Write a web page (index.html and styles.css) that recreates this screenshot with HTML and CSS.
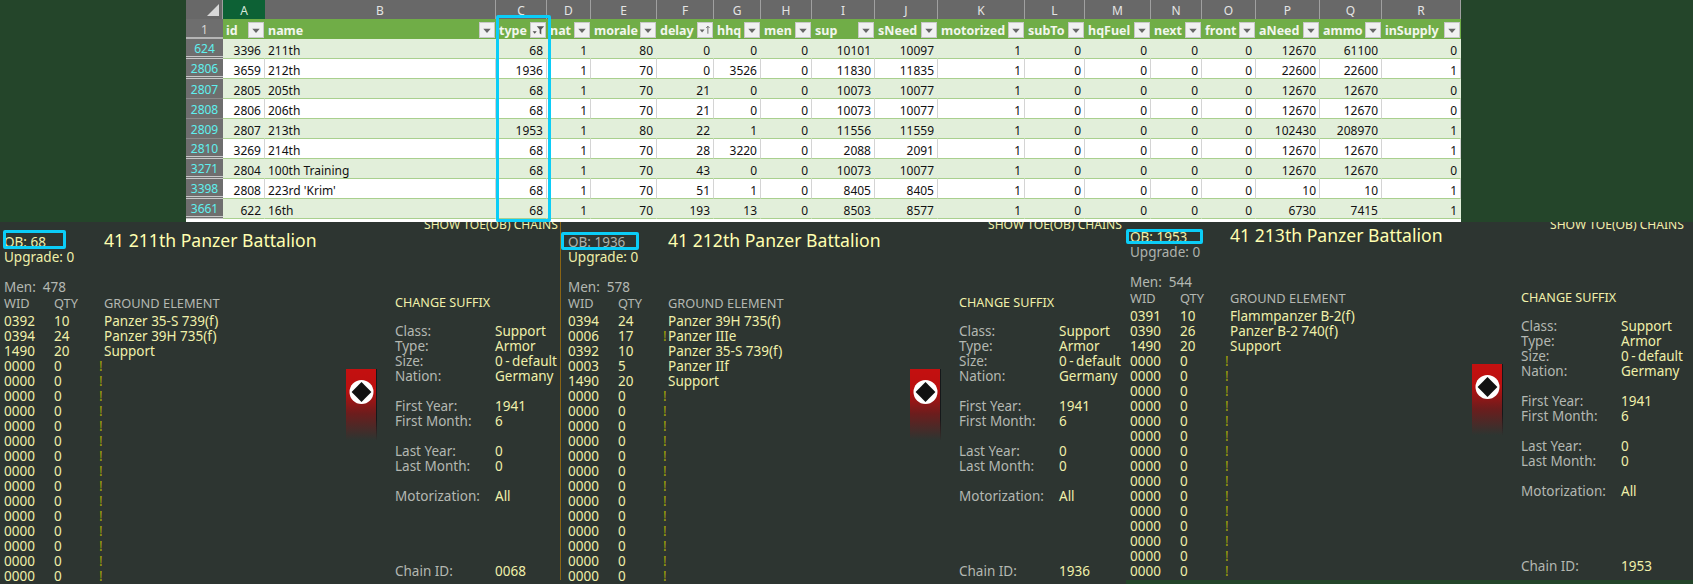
FILE: index.html
```html
<!DOCTYPE html>
<html lang="en">
<head>
    <meta charset="UTF-8">
    <title>TOE chains</title>
    <link rel="stylesheet" href="styles.css">
</head>
<body>
    <svg class="defs" width="0" height="0">
        <symbol id="arrow" viewBox="0 0 17 17"><path d="M4 7h9l-4.500 5z" fill="#666"/></symbol>
        <symbol id="funnel" viewBox="0 0 17 17"><path d="M7 4h9l-3.500 4v6l-2-1.500v-4.500z" fill="#555"/><path d="M2 10h5l-2.500 3z" fill="#555"/></symbol>
        <symbol id="sort" viewBox="0 0 17 17"><path d="M2 8h6l-3 3.500z" fill="#666"/><path d="M12 4v9" stroke="#555"/><path d="M10 6l2-2 2 2" stroke="#555" fill="none"/></symbol>
        <symbol id="banner" viewBox="0 0 31 71">
            <circle cx="15.500" cy="23" r="12" fill="#fff"/>
            <rect x="8.500" y="16" width="14" height="14" fill="#111" transform="rotate(45 15.500 23)"/>
        </symbol>
    </svg>

    <div class="sheet">
        <table>
            <colgroup>
                <col class="w-head"><col class="w-a"><col class="w-b"><col class="w-c"><col class="w-d"><col class="w-e"><col class="w-f"><col class="w-g"><col class="w-h"><col class="w-i"><col class="w-j"><col class="w-k"><col class="w-l"><col class="w-m"><col class="w-n"><col class="w-o"><col class="w-p"><col class="w-q"><col class="w-r">
            </colgroup>
            <thead>
                <tr class="letters">
                    <th class="corner"><span class="corner-mark"></span></th>
                    <th class="picked">A</th><th>B</th><th>C</th><th>D</th><th>E</th><th>F</th><th>G</th><th>H</th><th>I</th><th>J</th><th>K</th><th>L</th><th>M</th><th>N</th><th>O</th><th>P</th><th>Q</th><th>R</th>
                </tr>
                <tr class="titles">
                    <th class="row-no first">1</th>
                    <th><div class="title-cell">id<svg class="drop"><use href="#arrow"/></svg></div></th>
                    <th><div class="title-cell">name<svg class="drop"><use href="#arrow"/></svg></div></th>
                    <th><div class="title-cell">type<svg class="drop"><use href="#funnel"/></svg></div></th>
                    <th><div class="title-cell">nat<svg class="drop"><use href="#arrow"/></svg></div></th>
                    <th><div class="title-cell">morale<svg class="drop"><use href="#arrow"/></svg></div></th>
                    <th><div class="title-cell">delay<svg class="drop"><use href="#sort"/></svg></div></th>
                    <th><div class="title-cell">hhq<svg class="drop"><use href="#arrow"/></svg></div></th>
                    <th><div class="title-cell">men<svg class="drop"><use href="#arrow"/></svg></div></th>
                    <th><div class="title-cell">sup<svg class="drop"><use href="#arrow"/></svg></div></th>
                    <th><div class="title-cell">sNeed<svg class="drop"><use href="#arrow"/></svg></div></th>
                    <th><div class="title-cell">motorized<svg class="drop"><use href="#arrow"/></svg></div></th>
                    <th><div class="title-cell">subTo<svg class="drop"><use href="#arrow"/></svg></div></th>
                    <th><div class="title-cell">hqFuel<svg class="drop"><use href="#arrow"/></svg></div></th>
                    <th><div class="title-cell">next<svg class="drop"><use href="#arrow"/></svg></div></th>
                    <th><div class="title-cell">front<svg class="drop"><use href="#arrow"/></svg></div></th>
                    <th><div class="title-cell">aNeed<svg class="drop"><use href="#arrow"/></svg></div></th>
                    <th><div class="title-cell">ammo<svg class="drop"><use href="#arrow"/></svg></div></th>
                    <th><div class="title-cell">inSupply<svg class="drop"><use href="#arrow"/></svg></div></th>
                </tr>
            </thead>
            <tbody>
                <tr><th class="row-no gap">624</th><td>3396</td><td class="name">211th</td><td>68</td><td>1</td><td>80</td><td>0</td><td>0</td><td>0</td><td>10101</td><td>10097</td><td>1</td><td>0</td><td>0</td><td>0</td><td>0</td><td>12670</td><td>61100</td><td>0</td></tr>
                <tr><th class="row-no gap">2806</th><td>3659</td><td class="name">212th</td><td>1936</td><td>1</td><td>70</td><td>0</td><td>3526</td><td>0</td><td>11830</td><td>11835</td><td>1</td><td>0</td><td>0</td><td>0</td><td>0</td><td>22600</td><td>22600</td><td>1</td></tr>
                <tr><th class="row-no">2807</th><td>2805</td><td class="name">205th</td><td>68</td><td>1</td><td>70</td><td>21</td><td>0</td><td>0</td><td>10073</td><td>10077</td><td>1</td><td>0</td><td>0</td><td>0</td><td>0</td><td>12670</td><td>12670</td><td>0</td></tr>
                <tr><th class="row-no">2808</th><td>2806</td><td class="name">206th</td><td>68</td><td>1</td><td>70</td><td>21</td><td>0</td><td>0</td><td>10073</td><td>10077</td><td>1</td><td>0</td><td>0</td><td>0</td><td>0</td><td>12670</td><td>12670</td><td>0</td></tr>
                <tr><th class="row-no">2809</th><td>2807</td><td class="name">213th</td><td>1953</td><td>1</td><td>80</td><td>22</td><td>1</td><td>0</td><td>11556</td><td>11559</td><td>1</td><td>0</td><td>0</td><td>0</td><td>0</td><td>102430</td><td>208970</td><td>1</td></tr>
                <tr><th class="row-no gap">2810</th><td>3269</td><td class="name">214th</td><td>68</td><td>1</td><td>70</td><td>28</td><td>3220</td><td>0</td><td>2088</td><td>2091</td><td>1</td><td>0</td><td>0</td><td>0</td><td>0</td><td>12670</td><td>12670</td><td>1</td></tr>
                <tr><th class="row-no gap">3271</th><td>2804</td><td class="name">100th Training</td><td>68</td><td>1</td><td>70</td><td>43</td><td>0</td><td>0</td><td>10073</td><td>10077</td><td>1</td><td>0</td><td>0</td><td>0</td><td>0</td><td>12670</td><td>12670</td><td>0</td></tr>
                <tr><th class="row-no gap">3398</th><td>2808</td><td class="name">223rd 'Krim'</td><td>68</td><td>1</td><td>70</td><td>51</td><td>1</td><td>0</td><td>8405</td><td>8405</td><td>1</td><td>0</td><td>0</td><td>0</td><td>0</td><td>10</td><td>10</td><td>1</td></tr>
                <tr><th class="row-no gap">3661</th><td>622</td><td class="name">16th</td><td>68</td><td>1</td><td>70</td><td>193</td><td>13</td><td>0</td><td>8503</td><td>8577</td><td>1</td><td>0</td><td>0</td><td>0</td><td>0</td><td>6730</td><td>7415</td><td>1</td></tr>
            </tbody>
        </table>
        <div class="col-mark"></div>
    </div>

    <div class="panels">
        <section class="panel panel-one">
            <div class="toe-link">SHOW TOE(OB) CHAINS</div>
            <div class="panel-main">
                <div class="unit">
                    <div class="unit-head">
                        <div class="stats">
                            <div class="ob">OB: 68<span class="ob-mark"></span></div>
                            <div>Upgrade: 0</div>
                        </div>
                        <h1>41 211th Panzer Battalion</h1>
                    </div>
                    <div class="men">Men:&nbsp; 478</div>
                    <div class="el-head"><span>WID</span><span>QTY</span><span></span><span>GROUND ELEMENT</span></div>
                    <div class="el"><span>0392</span><span>10</span><i></i><span>Panzer 35-S 739(f)</span></div>
                    <div class="el"><span>0394</span><span>24</span><i></i><span>Panzer 39H 735(f)</span></div>
                    <div class="el"><span>1490</span><span>20</span><i></i><span>Support</span></div>
                    <div class="el"><span>0000</span><span>0</span><i>!</i></div>
                    <div class="el"><span>0000</span><span>0</span><i>!</i></div>
                    <div class="el"><span>0000</span><span>0</span><i>!</i></div>
                    <div class="el"><span>0000</span><span>0</span><i>!</i></div>
                    <div class="el"><span>0000</span><span>0</span><i>!</i></div>
                    <div class="el"><span>0000</span><span>0</span><i>!</i></div>
                    <div class="el"><span>0000</span><span>0</span><i>!</i></div>
                    <div class="el"><span>0000</span><span>0</span><i>!</i></div>
                    <div class="el"><span>0000</span><span>0</span><i>!</i></div>
                    <div class="el"><span>0000</span><span>0</span><i>!</i></div>
                    <div class="el"><span>0000</span><span>0</span><i>!</i></div>
                    <div class="el"><span>0000</span><span>0</span><i>!</i></div>
                    <div class="el"><span>0000</span><span>0</span><i>!</i></div>
                    <div class="el"><span>0000</span><span>0</span><i>!</i></div>
                    <div class="el"><span>0000</span><span>0</span><i>!</i></div>
                </div>
                <div class="flag"><svg class="flag-mark"><use href="#banner"/></svg></div>
                <div class="info">
                    <div class="suffix">CHANGE SUFFIX</div>
                    <dl>
                        <dt>Class:</dt><dd>Support</dd>
                        <dt>Type:</dt><dd>Armor</dd>
                        <dt>Size:</dt><dd>0 - default</dd>
                        <dt>Nation:</dt><dd>Germany</dd>
                    </dl>
                    <dl>
                        <dt>First Year:</dt><dd>1941</dd>
                        <dt>First Month:</dt><dd>6</dd>
                    </dl>
                    <dl>
                        <dt>Last Year:</dt><dd>0</dd>
                        <dt>Last Month:</dt><dd>0</dd>
                    </dl>
                    <dl>
                        <dt>Motorization:</dt><dd>All</dd>
                    </dl>
                    <dl class="chain">
                        <dt>Chain ID:</dt><dd>0068</dd>
                    </dl>
                </div>
            </div>
        </section>

        <section class="panel panel-two">
            <div class="toe-link">SHOW TOE(OB) CHAINS</div>
            <div class="panel-main">
                <div class="unit">
                    <div class="unit-head">
                        <div class="stats">
                            <div class="ob">OB: 1936<span class="ob-mark"></span></div>
                            <div>Upgrade: 0</div>
                        </div>
                        <h1>41 212th Panzer Battalion</h1>
                    </div>
                    <div class="men">Men:&nbsp; 578</div>
                    <div class="el-head"><span>WID</span><span>QTY</span><span></span><span>GROUND ELEMENT</span></div>
                    <div class="el"><span>0394</span><span>24</span><i></i><span>Panzer 39H 735(f)</span></div>
                    <div class="el"><span>0006</span><span>17</span><i>!</i><span>Panzer IIIe</span></div>
                    <div class="el"><span>0392</span><span>10</span><i></i><span>Panzer 35-S 739(f)</span></div>
                    <div class="el"><span>0003</span><span>5</span><i></i><span>Panzer IIf</span></div>
                    <div class="el"><span>1490</span><span>20</span><i></i><span>Support</span></div>
                    <div class="el"><span>0000</span><span>0</span><i>!</i></div>
                    <div class="el"><span>0000</span><span>0</span><i>!</i></div>
                    <div class="el"><span>0000</span><span>0</span><i>!</i></div>
                    <div class="el"><span>0000</span><span>0</span><i>!</i></div>
                    <div class="el"><span>0000</span><span>0</span><i>!</i></div>
                    <div class="el"><span>0000</span><span>0</span><i>!</i></div>
                    <div class="el"><span>0000</span><span>0</span><i>!</i></div>
                    <div class="el"><span>0000</span><span>0</span><i>!</i></div>
                    <div class="el"><span>0000</span><span>0</span><i>!</i></div>
                    <div class="el"><span>0000</span><span>0</span><i>!</i></div>
                    <div class="el"><span>0000</span><span>0</span><i>!</i></div>
                    <div class="el"><span>0000</span><span>0</span><i>!</i></div>
                    <div class="el"><span>0000</span><span>0</span><i>!</i></div>
                </div>
                <div class="flag"><svg class="flag-mark"><use href="#banner"/></svg></div>
                <div class="info">
                    <div class="suffix">CHANGE SUFFIX</div>
                    <dl>
                        <dt>Class:</dt><dd>Support</dd>
                        <dt>Type:</dt><dd>Armor</dd>
                        <dt>Size:</dt><dd>0 - default</dd>
                        <dt>Nation:</dt><dd>Germany</dd>
                    </dl>
                    <dl>
                        <dt>First Year:</dt><dd>1941</dd>
                        <dt>First Month:</dt><dd>6</dd>
                    </dl>
                    <dl>
                        <dt>Last Year:</dt><dd>0</dd>
                        <dt>Last Month:</dt><dd>0</dd>
                    </dl>
                    <dl>
                        <dt>Motorization:</dt><dd>All</dd>
                    </dl>
                    <dl class="chain">
                        <dt>Chain ID:</dt><dd>1936</dd>
                    </dl>
                </div>
            </div>
        </section>

        <section class="panel panel-three">
            <div class="toe-link">SHOW TOE(OB) CHAINS</div>
            <div class="panel-main">
                <div class="unit">
                    <div class="unit-head">
                        <div class="stats">
                            <div class="ob">OB: 1953<span class="ob-mark"></span></div>
                            <div>Upgrade: 0</div>
                        </div>
                        <h1>41 213th Panzer Battalion</h1>
                    </div>
                    <div class="men">Men:&nbsp; 544</div>
                    <div class="el-head"><span>WID</span><span>QTY</span><span></span><span>GROUND ELEMENT</span></div>
                    <div class="el"><span>0391</span><span>10</span><i></i><span>Flammpanzer B-2(f)</span></div>
                    <div class="el"><span>0390</span><span>26</span><i></i><span>Panzer B-2 740(f)</span></div>
                    <div class="el"><span>1490</span><span>20</span><i></i><span>Support</span></div>
                    <div class="el"><span>0000</span><span>0</span><i>!</i></div>
                    <div class="el"><span>0000</span><span>0</span><i>!</i></div>
                    <div class="el"><span>0000</span><span>0</span><i>!</i></div>
                    <div class="el"><span>0000</span><span>0</span><i>!</i></div>
                    <div class="el"><span>0000</span><span>0</span><i>!</i></div>
                    <div class="el"><span>0000</span><span>0</span><i>!</i></div>
                    <div class="el"><span>0000</span><span>0</span><i>!</i></div>
                    <div class="el"><span>0000</span><span>0</span><i>!</i></div>
                    <div class="el"><span>0000</span><span>0</span><i>!</i></div>
                    <div class="el"><span>0000</span><span>0</span><i>!</i></div>
                    <div class="el"><span>0000</span><span>0</span><i>!</i></div>
                    <div class="el"><span>0000</span><span>0</span><i>!</i></div>
                    <div class="el"><span>0000</span><span>0</span><i>!</i></div>
                    <div class="el"><span>0000</span><span>0</span><i>!</i></div>
                    <div class="el"><span>0000</span><span>0</span><i>!</i></div>
                </div>
                <div class="flag"><svg class="flag-mark"><use href="#banner"/></svg></div>
                <div class="info">
                    <div class="suffix">CHANGE SUFFIX</div>
                    <dl>
                        <dt>Class:</dt><dd>Support</dd>
                        <dt>Type:</dt><dd>Armor</dd>
                        <dt>Size:</dt><dd>0 - default</dd>
                        <dt>Nation:</dt><dd>Germany</dd>
                    </dl>
                    <dl>
                        <dt>First Year:</dt><dd>1941</dd>
                        <dt>First Month:</dt><dd>6</dd>
                    </dl>
                    <dl>
                        <dt>Last Year:</dt><dd>0</dd>
                        <dt>Last Month:</dt><dd>0</dd>
                    </dl>
                    <dl>
                        <dt>Motorization:</dt><dd>All</dd>
                    </dl>
                    <dl class="chain">
                        <dt>Chain ID:</dt><dd>1953</dd>
                    </dl>
                </div>
            </div>
        </section>
    </div>
</body>
</html>
```
FILE: styles.css
```css
* {
    margin: 0;
    padding: 0;
    box-sizing: border-box;
}

html, body {
    height: 584px;
    overflow: hidden;
}

body {
    background: #24452a;
    font-family: "Noto Sans", sans-serif;
}

.defs {
    position: absolute;
}

/* Spreadsheet */
.sheet {
    position: relative;
    width: 1275px;
    height: 222px;
    margin-left: 186px;
    background: #fff;
    overflow: hidden;
}

table {
    width: 1275px;
    table-layout: fixed;
    border-collapse: separate;
    border-spacing: 0;
    font-size: 12px;
    color: #111;
}

.w-head { width: 37px; }
.w-a { width: 42px; }
.w-b { width: 231px; }
.w-c { width: 51px; }
.w-d { width: 44px; }
.w-e { width: 66px; }
.w-f { width: 57px; }
.w-g { width: 47px; }
.w-h { width: 51px; }
.w-i { width: 63px; }
.w-j { width: 63px; }
.w-k { width: 87px; }
.w-l { width: 60px; }
.w-m { width: 66px; }
.w-n { width: 51px; }
.w-o { width: 54px; }
.w-p { width: 64px; }
.w-q { width: 62px; }
.w-r { width: 79px; }

.letters th {
    height: 19px;
    padding-top: 1px;
    background: #686868;
    border-right: 1px solid #a0a0a0;
    color: #e4e4e4;
    font-weight: 400;
    font-size: 12px;
    line-height: 15px;
}

.letters .corner {
    position: relative;
}

.corner-mark {
    position: absolute;
    right: 3px;
    bottom: 3px;
    border-style: solid;
    border-width: 0 0 12px 12px;
    border-color: transparent transparent #d8d8d8 transparent;
}

.letters .picked {
    background: #0d6135;
    color: #d8e8dc;
    border-right: none;
}

.titles th {
    height: 20px;
    background: #70ad47;
    color: #f2f6ee;
    text-align: left;
    font-size: 12.5px;
    font-weight: 700;
}

.title-cell {
    display: flex;
    align-items: center;
    justify-content: space-between;
    height: 20px;
    padding: 2px 0 0 3px;
    white-space: nowrap;
    overflow: hidden;
}

.drop {
    flex: none;
    width: 16px;
    height: 16px;
    margin-right: 1px;
    background: #f1f1f1;
    border: 1px solid #c8c8c8;
}

th.row-no,
.titles th.row-no {
    padding-top: 3px;
    background: #6e6e6e;
    color: #5ff0ef;
    font-weight: 400;
    font-size: 12px;
    line-height: 14px;
    text-align: center;
    border-bottom: 1px solid #8c8c8c;
}

.titles th.first {
    color: #d6d6d6;
    border-bottom: 2px solid #b5b5b5;
}

th.gap {
    border-bottom: 3px double #c8c8c8;
}

td {
    height: 20px;
    padding: 4px 3px 0 0;
    line-height: 14px;
    text-align: right;
    border-right: 1px solid #d4d4d4;
    border-bottom: 1px solid #a9d08e;
    white-space: nowrap;
    overflow: hidden;
}

td.name {
    padding-left: 3px;
    text-align: left;
}

tbody tr:nth-child(odd) td {
    background: #e2efda;
    border-right-color: #e2efda;
}

.col-mark {
    position: absolute;
    left: 310px;
    top: 15px;
    width: 55px;
    height: 207px;
    border: 3px solid #0bcdf7;
    border-radius: 2px;
}

/* Game editor panels */
.panels {
    display: flex;
    align-items: flex-start;
    font-size: 13.5px;
    line-height: 15px;
    color: #f0f0aa;
}

.panel {
    position: relative;
    flex: none;
    overflow: hidden;
    background: #2d3531;
    padding-top: 1px;
}

.panel-one {
    width: 560px;
    height: 362px;
    padding-left: 4px;
}

.panel-two {
    width: 566px;
    height: 362px;
    padding-left: 8px;
}

.panel-two::before {
    content: "";
    position: absolute;
    left: 0;
    top: 0;
    bottom: 4px;
    width: 1px;
    background: #8a6414;
}

.panel-three {
    width: 567px;
    height: 358px;
    padding-left: 4px;
}

.toe-link {
    height: 5px;
    margin-top: -6px;
    margin-left: 420px;
    font-size: 12.1px;
    white-space: nowrap;
}

.panel-three .toe-link {
    height: 0;
}

.panel-main {
    display: flex;
    padding-top: 13px;
}

.unit {
    flex: none;
    width: 342px;
}

.unit-head {
    display: flex;
    height: 45px;
}

.stats {
    flex: none;
    width: 100px;
}

.ob {
    position: relative;
}

.ob-mark {
    position: absolute;
    border: 3px solid #0bcdf7;
    border-radius: 2px;
}

.panel-one .ob-mark { left: -1px; top: -5px; width: 63px; height: 19px; }
.panel-two .ob-mark { left: -7px; top: -3px; width: 78px; height: 18px; }
.panel-three .ob-mark { left: -4px; top: -1px; width: 77px; height: 15px; }

.panel-two .ob { color: #aeb2ac; }
.panel-three .stats div:nth-child(2) { color: #aeb2ac; }

h1 {
    margin-top: -5px;
    font-size: 17.6px;
    line-height: 20px;
    font-weight: 400;
    color: #ffffb0;
    white-space: nowrap;
}

.men,
.el-head,
dt {
    color: #b4b8b2;
}

.men {
    height: 15px;
}

.el-head,
.el {
    display: grid;
    grid-template-columns: 50px 45px 5px 1fr;
    white-space: nowrap;
}

.el-head {
    margin: 1px 0 3px;
    font-size: 12.8px;
}

.el i {
    font-style: normal;
    color: #a3a30a;
}

.flag {
    flex: none;
    position: relative;
    width: 31px;
    height: 71px;
    margin-top: 134px;
    background: linear-gradient(#c41010 0, #bb1010 30%, #6e1c1c 62%, #2d3531 100%);
    border-right: 1px solid;
    border-image: linear-gradient(#15181a 70%, transparent) 1;
}

.flag-mark {
    display: block;
    width: 31px;
    height: 71px;
}

.info {
    flex: none;
    width: 166px;
    margin-left: 18px;
    padding-top: 60px;
    white-space: nowrap;
}

.suffix {
    margin-bottom: 14px;
    font-size: 12.6px;
}

dl {
    display: grid;
    grid-template-columns: 100px 1fr;
    margin-bottom: 15px;
}

dd {
    word-spacing: -1px;
}

.chain {
    margin-top: 60px;
}
```
